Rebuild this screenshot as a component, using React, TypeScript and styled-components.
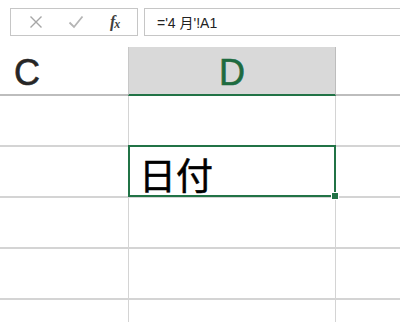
import styled, { createGlobalStyle } from 'styled-components';

const GlobalStyle = createGlobalStyle`
  html, body {
    margin: 0;
    padding: 0;
    background: #ffffff;
  }
  body {
    width: 400px;
    height: 322px;
    overflow: hidden;
    font-family: 'Liberation Sans', Arial, 'Noto Sans CJK JP', sans-serif;
  }
`;

const Sheet = styled.div`
  width: 400px;
  height: 322px;
  display: flex;
  flex-direction: column;
  overflow: hidden;
`;

const FormulaBar = styled.div`
  display: flex;
  gap: 6px;
  padding: 8px 0 0 10px;
  height: 28px;
  box-sizing: content-box;
`;

const ButtonBox = styled.div`
  width: 128px;
  height: 28px;
  box-sizing: border-box;
  border: 1px solid #c6c6c6;
  display: flex;
  align-items: center;
  padding-left: 18px;
  gap: 25px;
  color: #a6a6a6;
`;

const FxLabel = styled.span`
  font-family: 'Liberation Serif', 'Times New Roman', serif;
  font-style: italic;
  font-weight: bold;
  font-size: 16px;
  color: #404040;
  margin-left: 1px;
  letter-spacing: -1px;

  small {
    font-size: 12px;
    vertical-align: -1px;
  }
`;

const FormulaInput = styled.div`
  flex: 1;
  height: 28px;
  box-sizing: border-box;
  border: 1px solid #c6c6c6;
  border-right: none;
  display: flex;
  align-items: center;
  padding-left: 12px;
  font-size: 14px;
  color: #222222;
`;

const Grid = styled.div`
  margin-top: 11px;
  display: grid;
  grid-template-columns: 129px 207px 1fr;
  grid-auto-rows: 51px;
  grid-template-rows: 49px;
`;

const ColHeader = styled.div<{ $active?: boolean }>`
  display: flex;
  align-items: center;
  justify-content: ${(p) => (p.$active ? 'center' : 'flex-start')};
  padding-left: ${(p) => (p.$active ? '0' : '14px')};
  padding-top: 4px;
  box-sizing: border-box;
  font-size: 36px;
  color: ${(p) => (p.$active ? '#1e6b3f' : '#262626')};
  background: ${(p) => (p.$active ? '#d9d9d9' : '#ffffff')};
  border-bottom: ${(p) => (p.$active ? '2px solid #217346' : '2px solid #bdbdbd')};
  border-left: ${(p) => (p.$active ? '1px solid #c8c8c8' : 'none')};
  border-right: ${(p) => (p.$active ? '1px solid #bdbdbd' : 'none')};
  margin-left: ${(p) => (p.$active ? '-1px' : '0')};
  -webkit-text-stroke: 0.6px currentColor;
`;

const Cell = styled.div<{ $selected?: boolean }>`
  position: relative;
  box-sizing: border-box;
  border-right: 1px solid #d4d4d4;
  border-bottom: 2px solid #d4d4d4;
  display: flex;
  align-items: center;
  padding-left: 10px;
  padding-top: 4px;
  font-size: 37px;
  color: #000000;
  -webkit-text-stroke: 0.5px #000000;

  ${(p) =>
    p.$selected &&
    `
    &::after {
      content: '';
      position: absolute;
      left: -1px;
      top: -2px;
      right: -1px;
      bottom: -1px;
      border: 2px solid #217346;
    }
  `}
`;

const FillHandle = styled.span`
  position: absolute;
  right: -4px;
  bottom: -4px;
  width: 6px;
  height: 6px;
  background: #217346;
  border: 1px solid #ffffff;
  z-index: 2;
`;

const LastCell = styled(Cell)`
  border-right: none;
`;

const ROWS = 5;

export default function App() {
  return (
    <>
      <GlobalStyle />
      <Sheet>
        <FormulaBar>
          <ButtonBox>
            <svg width="14" height="14" viewBox="0 0 14 14">
              <path d="M1.5 1.5 L12.5 12.5 M12.5 1.5 L1.5 12.5" stroke="#a6a6a6" strokeWidth="1.4" fill="none" />
            </svg>
            <svg width="16" height="14" viewBox="0 0 16 14">
              <path d="M1.5 7.5 L6 12 L14.5 1.5" stroke="#b5b5b5" strokeWidth="1.8" fill="none" />
            </svg>
            <FxLabel>
              f<small>x</small>
            </FxLabel>
          </ButtonBox>
          <FormulaInput>='4 月'!A1</FormulaInput>
        </FormulaBar>
        <Grid>
          <ColHeader>C</ColHeader>
          <ColHeader $active>D</ColHeader>
          <ColHeader />
          {Array.from({ length: ROWS }).map((_, r) => (
            <Row key={r} index={r} />
          ))}
        </Grid>
      </Sheet>
    </>
  );
}

function Row({ index }: { index: number }) {
  const selected = index === 1;
  return (
    <>
      <Cell />
      <Cell $selected={selected}>
        {selected && '日付'}
        {selected && <FillHandle />}
      </Cell>
      <LastCell />
    </>
  );
}
